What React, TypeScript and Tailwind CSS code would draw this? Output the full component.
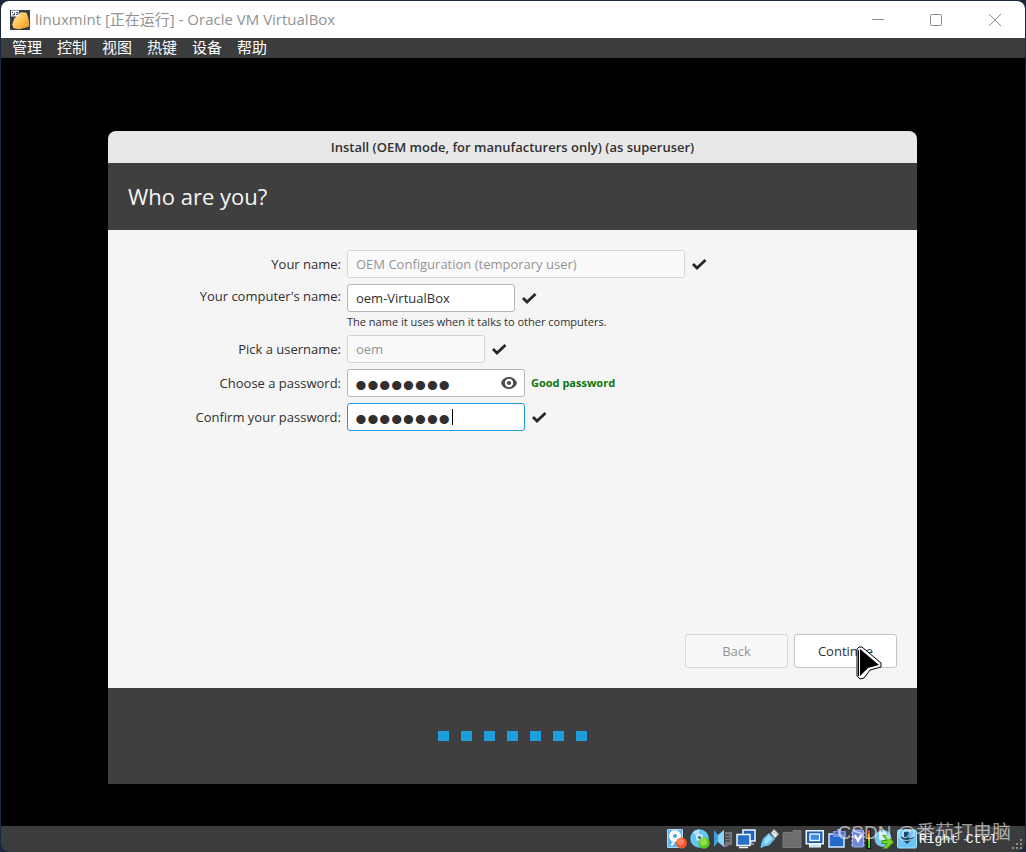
import React from "react";

const uiFont = "font-['Open_Sans','Noto_Sans_CJK_SC',sans-serif]";

const menus = ["管理", "控制", "视图", "热键", "设备", "帮助"];

function AppIcon() {
  return (
    <svg viewBox="0 0 20 20" className="size-5 shrink-0" aria-hidden="true">
      <defs>
        <linearGradient id="gold" x1="0" y1="0" x2="1" y2="1">
          <stop offset="0" stopColor="#ffe9a0" />
          <stop offset="0.55" stopColor="#fdc04c" />
          <stop offset="1" stopColor="#ef9a2c" />
        </linearGradient>
      </defs>
      <rect width="20" height="20" fill="#353b47" />
      <path d="M11 3 16 3.500 18 10 18.500 16 9 18.500 4 17.500 3 14.500 5 9Z" fill="url(#gold)" stroke="url(#gold)" strokeWidth="1.5" strokeLinejoin="round" />
      <rect x="1" y="0.500" width="8" height="6" fill="#fff" />
      <path d="M2 5h2.500V2.500M6 4.500h2V2.500H6M2 2.500h1" stroke="#4a5260" fill="none" />
    </svg>
  );
}

function Check() {
  return (
    <svg viewBox="0 0 16 14" className="h-3.5 w-4 shrink-0" role="img" aria-label="OK">
      <path d="M2 7 6 11 14.500 3" fill="none" stroke="#26282a" strokeWidth="2.8" />
    </svg>
  );
}

function Eye() {
  return (
    <svg viewBox="0 0 16 12" className="h-3 w-4" aria-hidden="true">
      <path fillRule="evenodd" fill="#4a4c4e" d="M8 0C4 0 1.200 2.500 0 6c1.200 3.500 4 6 8 6s6.800-2.500 8-6C14.800 2.500 12 0 8 0Zm0 1.800a4.200 4.200 0 1 1 0 8.400 4.200 4.200 0 0 1 0-8.400Z" />
      <circle cx="8" cy="6" r="2.100" fill="#4a4c4e" />
    </svg>
  );
}

const statusIcons: { name: string; art: React.ReactNode }[] = [
  {
    name: "Hard disk",
    art: (
      <>
        <rect x="0.500" y="0.500" width="15" height="18" rx="0.500" fill="#5db4ec" stroke="#a9dcf8" />
        <circle cx="8" cy="7" r="6" fill="#fff" />
        <circle cx="8" cy="7" r="2" fill="#4ba3de" />
        <path d="M3 16.500h3L9 9Z" fill="#fff" />
        <circle cx="14.500" cy="14" r="5.500" fill="#f0562e" />
        <circle cx="13.800" cy="12.800" r="3.500" fill="#ff9875" opacity="0.7" />
      </>
    ),
  },
  {
    name: "Optical drive",
    art: (
      <>
        <circle cx="9.500" cy="9.500" r="9.300" fill="#65c6f2" />
        <path d="M9.500 9.500 2.500 3.500A9.300 9.300 0 0 1 9 .200Z" fill="#a8e2fb" />
        <circle cx="9.500" cy="8.500" r="3.500" fill="#d9f3fd" />
        <circle cx="9.500" cy="8.500" r="1.800" fill="#3d7fae" />
        <circle cx="14" cy="14" r="5.700" fill="#5fc51f" />
        <circle cx="13.500" cy="12.800" r="3.700" fill="#a0ea58" opacity="0.7" />
      </>
    ),
  },
  {
    name: "Audio",
    art: (
      <>
        <path d="M12 3h7v13h-3l-2 2h-3v-3h1Z" fill="#74777a" />
        <path d="M12 6h5M12 9h5M12 12h5" stroke="#45484b" strokeWidth="1.5" />
        <path d="M1 6h4l6-5v17l-6-5H1Z" fill="#86d6fb" />
        <path d="M1 1v17l4-5V6Z" fill="#3d9edc" />
      </>
    ),
  },
  {
    name: "Network",
    art: (
      <>
        <rect x="7" y="1" width="12" height="11" fill="#1e62bd" stroke="#f1f8ff" strokeWidth="1.500" />
        <path d="M15 12v3h3" stroke="#dcecff" fill="none" />
        <rect x="1" y="5.500" width="13" height="11" fill="#286fca" stroke="#f1f8ff" strokeWidth="1.500" />
        <path d="M3 18.500h9" stroke="#f1f8ff" strokeWidth="1.500" />
      </>
    ),
  },
  {
    name: "USB",
    art: (
      <>
        <path d="m12 4 3-3.500L19.500 5l-3.500 4Z" fill="#ececec" stroke="#aaa" />
        <path d="M10 4 16 10 10 16.500 5 17.500 1.500 19.500 2 15 4 9.500Z" fill="#69c3f3" />
        <path d="m10 6 3 3.500-5 5-3 1 1-5Z" fill="#a5defd" />
        <path d="m14.500 3 .8.800m1.500.700.800.800" stroke="#555" />
      </>
    ),
  },
  {
    name: "Shared folders",
    art: <path d="M1 3.500h10V1.500h8v17H1Z" fill="#6c6e70" stroke="#77797b" />,
  },
  {
    name: "Display",
    art: (
      <>
        <path d="M0.500 1h18.500v14.500h-3v3H4v-3H.500Z" fill="#e8f3ff" />
        <rect x="2" y="2.500" width="15.500" height="11.500" fill="#1c5fb5" />
        <rect x="5" y="5" width="9.500" height="6.500" fill="#3d8ce0" stroke="#fff" strokeWidth="1.300" />
        <path d="M5 17h10" stroke="#b5cfea" />
      </>
    ),
  },
  {
    name: "Recording",
    art: (
      <>
        <rect x="1" y="5" width="15" height="13" fill="#246bc8" stroke="#d6eaff" strokeWidth="1.500" />
        <path d="M5 2h4V0h4v2h5v6H5Z" fill="#7b93e4" />
        <path d="M7 4h3m3 0h3" stroke="#5264c1" strokeWidth="2" />
      </>
    ),
  },
  {
    name: "Processor",
    art: (
      <>
        <rect x="1.500" y="1" width="11" height="17" rx="1" fill="#7188da" stroke="#9dafed" />
        <path d="M0 4h2M0 8h2M0 12h2M0 16h2m10-12h2m-2 4h2m-2 4h2m-2 4h2" stroke="#b9c6f5" />
        <path d="M4 6 7 12 10 6" fill="none" stroke="#fff" strokeWidth="2" />
        <path d="M15.500 0H20v20h-4.500Z" fill="#111" />
        <path d="M17 1h2v18h-2Z" fill="#f5452a" />
        <path d="M17 5h2v14h-2Z" fill="#fdb017" />
        <path d="M17 12h2v7h-2Z" fill="#37dc27" />
      </>
    ),
  },
  {
    name: "Mouse integration",
    art: (
      <>
        <circle cx="9" cy="9.500" r="8.500" fill="#73c8ef" />
        <path d="M5 3h7v7l-3 3-4-3Z" fill="#c8ecfb" />
        <path d="M9 6.500h4l6.500 6.500-6.500 6.500H9l4-5H8v-3h5Z" fill="#7ad22c" stroke="#3f9a16" />
      </>
    ),
  },
  {
    name: "Keyboard capture",
    art: (
      <>
        <rect x="0.500" y="1" width="19" height="18" rx="1.500" fill="#69c6f4" stroke="#a4e2ff" />
        <path d="M7 3h6v5h4l-7 7-7-7h4Z" fill="#174979" />
      </>
    ),
  },
];

function StatusBar() {
  return (
    <footer className="flex h-[26px] items-center justify-end bg-[#3b3c3d] pr-[25px]">
      <ul className="flex items-center gap-[3px]">
        {statusIcons.map((icon) => (
          <li key={icon.name}>
            <svg viewBox="0 0 20 20" className="size-5" role="img" aria-label={icon.name}>
              {icon.art}
            </svg>
          </li>
        ))}
      </ul>
      <span className="ml-0.5 w-[81px] whitespace-nowrap pt-0.5 font-['Liberation_Mono',monospace] text-[13px] leading-5 text-white">
        Right Ctrl
      </span>
    </footer>
  );
}

function SizeGrip() {
  return (
    <svg viewBox="0 0 12 12" className="absolute bottom-0.5 right-0.5 size-3" aria-hidden="true">
      <path
        d="M9 1h2v2H9ZM9 5h2v2H9ZM9 9h2v2H9ZM5 5h2v2H5ZM5 9h2v2H5ZM1 9h2v2H1Z"
        fill="#8b8c8d"
      />
    </svg>
  );
}

const inputBase = "h-7 rounded-[3px] border px-2 text-[13px] outline-none";
const disabledInput = "border-[#d3d3d3] bg-[#fafafa] text-[#949494]";
const activeInput = "border-[#b6b6b6] bg-white text-[#303030]";
const passwordInput =
  "h-7 w-[178px] rounded-[3px] border bg-white pl-[7px] pr-8 pt-1 font-['Liberation_Sans',sans-serif] text-[34px] leading-6 text-[#303030] caret-transparent outline-none";

function UserForm() {
  return (
    <div className="grid grid-cols-[213px_1fr] gap-x-1.5 gap-y-1.5 text-[13px] text-[#303030]">
      <label htmlFor="name" className="text-right leading-7">Your name:</label>
      <div className="flex items-center gap-1.5">
        <input id="name" disabled defaultValue="OEM Configuration (temporary user)" className={`${inputBase} ${disabledInput} w-[338px]`} />
        <Check />
      </div>

      <label htmlFor="host" className="text-right leading-6">Your computer's name:</label>
      <div>
        <div className="flex items-center gap-1.5">
          <input id="host" defaultValue="oem-VirtualBox" className={`${inputBase} ${activeInput} w-[168px]`} />
          <Check />
        </div>
        <p className="pt-0.5 text-[11px] leading-[15px]">The name it uses when it talks to other computers.</p>
      </div>

      <label htmlFor="user" className="text-right leading-7">Pick a username:</label>
      <div className="flex items-center gap-1.5">
        <input id="user" disabled defaultValue="oem" className={`${inputBase} ${disabledInput} w-[138px]`} />
        <Check />
      </div>

      <label htmlFor="password" className="text-right leading-7">Choose a password:</label>
      <div className="flex items-center gap-1.5">
        <div className="relative flex">
          <input id="password" type="password" defaultValue="password" className={`${passwordInput} border-[#b6b6b6]`} />
          <button type="button" aria-label="Show password" className="absolute right-2 top-2">
            <Eye />
          </button>
        </div>
        <span className="text-[11px] font-bold text-[#0b750b]">Good password</span>
      </div>

      <label htmlFor="confirm" className="text-right leading-7">Confirm your password:</label>
      <div className="flex items-center gap-1.5">
        <div className="relative flex">
          <input id="confirm" type="password" defaultValue="password" className={`${passwordInput} border-[#1f9ede]`} />
          <span className="absolute left-[105px] top-1.5 h-4 w-px bg-black" />
        </div>
        <Check />
      </div>
    </div>
  );
}

function Pointer() {
  return (
    <svg viewBox="0 0 28 36" className="pointer-events-none absolute left-[61px] top-[11px] h-9 w-7" aria-hidden="true">
      <path d="M2 4 4 2H7L26 18V22L15 25 9 33 5 34 2 31Z" fill="#fff" stroke="#000" />
      <path d="M5 4 24 20 13 23 5 31Z" fill="#000" />
      <path d="M3.500 5V31" stroke="#000" />
    </svg>
  );
}

function Installer() {
  return (
    <section className="mx-auto flex w-full max-w-[809px] flex-col overflow-hidden rounded-t-lg">
      <h1 className="bg-[#e8e8e8] text-center text-[13px] font-semibold leading-8 text-[#303030]">
        Install (OEM mode, for manufacturers only) (as superuser)
      </h1>
      <header className="bg-[#3f3f3f] px-5 py-[17px]">
        <h2 className="text-[22px] leading-[33px] text-[#f5f5f5]">Who are you?</h2>
      </header>
      <form className="flex min-h-[458px] flex-col justify-between bg-[#f5f5f5] p-5" onSubmit={(e) => e.preventDefault()}>
        <UserForm />
        <div className="flex justify-end gap-1.5 text-[13px]">
          <button type="button" disabled className="h-[34px] w-[103px] rounded-[3px] border border-[#d9d9d9] bg-[#f8f8f8] pt-px text-[#949494]">
            Back
          </button>
          <div className="relative">
            <button type="submit" className="h-[34px] w-[103px] rounded-[3px] border border-[#c4c4c4] bg-white pt-px text-[#303030]">
              Continue
            </button>
            <Pointer />
          </div>
        </div>
      </form>
      <div className="flex h-24 items-center justify-center gap-3 bg-[#3f3f3f]">
        {[1, 2, 3, 4, 5, 6, 7].map((step) => (
          <span key={step} className="h-2.5 w-[11px] bg-[#1f9ede]" />
        ))}
      </div>
    </section>
  );
}

export default function App() {
  return (
    <div className={`min-h-screen bg-[#1b2740] pl-px pr-px pt-px ${uiFont}`}>
      <div className="relative flex min-h-[calc(100vh-1px)] flex-col overflow-hidden rounded-lg bg-black">
        <header className="flex h-[37px] items-center bg-white pl-[9px] text-[#929292]">
          <AppIcon />
          <span className="ml-[5px] grow text-[15px]">linuxmint [正在运行] - Oracle VM VirtualBox</span>
          <div className="flex">
            <button type="button" aria-label="Minimize" className="flex h-9 w-[58px] items-center justify-center">
              <svg viewBox="0 0 12 12" className="size-3"><path d="M0 5.500h12" stroke="#8d8d8d" /></svg>
            </button>
            <button type="button" aria-label="Maximize" className="flex h-9 w-[58px] items-center justify-center">
              <svg viewBox="0 0 12 12" className="size-3"><rect x="0.500" y="0.500" width="11" height="11" rx="1" fill="none" stroke="#8d8d8d" /></svg>
            </button>
            <button type="button" aria-label="Close" className="flex h-9 w-[60px] items-center justify-center">
              <svg viewBox="0 0 12 12" className="size-3"><path d="M0 0 12 12M12 0 0 12" stroke="#8d8d8d" /></svg>
            </button>
          </div>
        </header>
        <nav className="flex h-5 items-center gap-[15px] bg-[#3b3c3d] pb-0.5 pl-[11px] text-[15px] leading-[18px] text-white">
          {menus.map((menu) => (
            <button key={menu} type="button">{menu}</button>
          ))}
        </nav>
        <main className="grow pb-[42px] pr-px pt-[73px]">
          <Installer />
        </main>
        <StatusBar />
        <SizeGrip />
        <span className="absolute bottom-[5px] right-3.5 whitespace-nowrap font-['Liberation_Sans','Noto_Sans_CJK_SC',sans-serif] text-[19px] leading-7 text-white/60">
          CSDN @番茄打电脑
        </span>
      </div>
    </div>
  );
}
